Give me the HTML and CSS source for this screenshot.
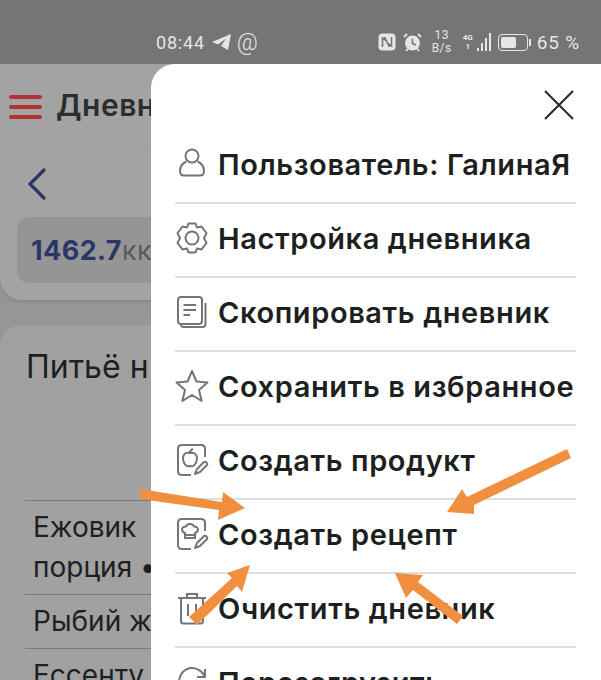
FILE: index.html
```html
<!DOCTYPE html>
<html lang="ru">
<head>
    <meta charset="UTF-8">
    <meta name="viewport" content="width=device-width, initial-scale=1.0">
    <title>Дневник</title>
    <link rel="stylesheet" href="styles.css">
</head>
<body>
    <!-- Статус-бар -->
    <div class="status-bar">
        <div class="status-left">
            <span class="time">08:44</span>
            <svg class="st-icon" width="21" height="18" viewBox="0 0 21 18"><path d="M20 1 L1 9 L7 11.5 L15 5.5 L10 13 L17 17 Z" fill="#e6e6e6"/></svg>
            <span class="at">@</span>
        </div>
        <div class="status-right">
            <svg width="18" height="18" viewBox="0 0 18 18"><rect x="0.5" y="0.5" width="17" height="17" rx="4" fill="#e6e6e6"/><path d="M4.5 14 V5 L9 8 M13.5 4 V13 L9 10 M6.5 4 L11.5 14" fill="none" stroke="#757575" stroke-width="1.6"/></svg>
            <svg width="19" height="19" viewBox="0 0 19 19"><circle cx="9.500" cy="10" r="7.500" fill="#e6e6e6"/><path d="M9.500 5.500 V10.500 L13 12" fill="none" stroke="#757575" stroke-width="1.600"/><path d="M1 4 L4 1 M18 4 L15 1 M3 18 L5 15.500 M16 18 L14 15.500" stroke="#e6e6e6" stroke-width="1.800"/></svg>
            <div class="speed"><span>13</span><span>B/s</span></div>
            <div class="net">
                <div class="net-label"><span>4G</span><span>1</span></div>
                <div class="bars"><i class="b1"></i><i class="b2"></i><i class="b3"></i><i class="b4"></i></div>
            </div>
            <div class="battery"><div class="battery-fill"></div></div>
            <span class="percent">65 %</span>
        </div>
    </div>

    <!-- Страница под меню -->
    <div class="page">
        <header class="top-bar">
            <div class="burger"><i></i><i></i><i></i></div>
            <h1>Дневник</h1>
        </header>
        <section class="summary">
            <svg class="back" width="20" height="32" viewBox="0 0 20 32"><path d="M17 2 L3 16 L17 30" fill="none" stroke="#2a3766" stroke-width="3.200" stroke-linecap="round"/></svg>
            <div class="kcal"><b>1462.7</b><span>кк</span></div>
        </section>
        <section class="drink">
            <h2>Питьё н</h2>
            <ul class="food">
                <li>Ежовик<br>порция •</li>
                <li>Рыбий ж</li>
                <li>Ессенту</li>
            </ul>
        </section>
    </div>

    <!-- Боковое меню -->
    <nav class="drawer">
        <div class="drawer-head">
            <svg width="32" height="32" viewBox="0 0 32 32"><path d="M2 2 L30 30 M30 2 L2 30" stroke="#26292c" stroke-width="2"/></svg>
        </div>
        <a class="item">
            <svg class="icon" viewBox="0 0 34 34"><circle cx="17" cy="9" r="6.500"/><path d="M11.500 14.500 C6 17 5 20 5 24 C5 27 6.500 28.500 9 28.500 H25 C27.500 28.500 29 27 29 24 C29 20 28 17 22.500 14.500"/></svg>
            <span>Пользователь: ГалинаЯ</span>
        </a>
        <a class="item">
            <svg class="icon" viewBox="0 0 34 34"><path d="M13.500 2.500 H20.500 L22 6.500 L26.500 5.500 L31.500 12 L29 17 L31.500 22 L26.500 28.500 L22 27.500 L20.500 31.500 H13.500 L12 27.500 L7.500 28.500 L2.500 22 L5 17 L2.500 12 L7.500 5.500 L12 6.500 Z" stroke-linejoin="round"/><circle cx="17" cy="17" r="6.500"/></svg>
            <span>Настройка дневника</span>
        </a>
        <a class="item">
            <svg class="icon" viewBox="0 0 34 34"><rect x="3" y="2" width="24" height="27" rx="3"/><path d="M8.500 10 H21 M8.500 15 H21 M8.500 20 H15"/><path d="M30.500 8 V29 C30.500 31 29.500 32 27.500 32 H9 C7 32 6 31 6 29.500"/></svg>
            <span>Скопировать дневник</span>
        </a>
        <a class="item">
            <svg class="icon" viewBox="0 0 34 34"><path d="M17 2 L21.500 12.500 L32.500 13.500 L24 21 L26.700 32 L17 26 L7.300 32 L10 21 L1.500 13.500 L12.500 12.500 Z" stroke-linejoin="round"/></svg>
            <span>Сохранить в избранное</span>
        </a>
        <a class="item">
            <svg class="icon" viewBox="0 0 34 34"><path d="M16 32 H7 C4.500 32 3 30.500 3 28 V6 C3 3.500 4.500 2 7 2 H26 C28.500 2 30 3.500 30 6 V14"/><path d="M15 10 C10 8.500 8 12 8 15.500 C8 20 11 24 15 23 C19 24 22 20 22 15.500 C22 12 20 8.500 15 10 Z M15 10 C15 8 16 6.500 18 6"/><path d="M20 31 L22 26 L29 19 C30.500 18 33 20.500 32 22 L25 29 Z" stroke-linejoin="round"/></svg>
            <span>Создать продукт</span>
        </a>
        <a class="item">
            <svg class="icon" viewBox="0 0 34 34"><path d="M16 32 H7 C4.500 32 3 30.500 3 28 V6 C3 3.500 4.500 2 7 2 H26 C28.500 2 30 3.500 30 6 V14"/><path d="M10 16 C6 15 6 9 11 9.500 C12 6 18 6 19 9.500 C24 9 24 15 20 16 V21 H10 Z M10 18 H20"/><path d="M20 31 L22 26 L29 19 C30.500 18 33 20.500 32 22 L25 29 Z" stroke-linejoin="round"/></svg>
            <span>Создать рецепт</span>
        </a>
        <a class="item">
            <svg class="icon" viewBox="0 0 34 34"><path d="M3 7 H31 M12 7 V3 H22 V7 M6 7 V30 C6 31.500 7 32.500 8.500 32.500 H25.500 C27 32.500 28 31.500 28 30 V7 M13 13 V25 M21 13 V25"/></svg>
            <span>Очистить дневник</span>
        </a>
        <a class="item">
            <svg class="icon" viewBox="0 0 34 34"><path d="M4 17 C4 9 10 3 17 3 C23 3 28 7 30 12 M30 4 V12 H22 M30 17 C30 25 24 31 17 31"/></svg>
            <span>Перезагрузить</span>
        </a>
    </nav>

    <!-- Стрелки поверх скриншота -->
    <svg class="arrows" width="601" height="680" viewBox="0 0 601 680">
        <path d="M140 489 L222 502 L223 492 L245 508 L218 520 L219 510 L140 499 Z"/>
        <path d="M567 449 L571 458 L474 505 L474 514 L447 512 L462 489 L467 497 Z"/>
        <path d="M189 617 L232 578 L227 573 L250 565 L242 592 L237 586 L197 625 Z"/>
        <path d="M463 616 L457 624 L413 590 L406 598 L395 573 L423 575 L418 582 Z"/>
    </svg>
</body>
</html>
```

FILE: styles.css
```css
/* Базовые стили */
html, body {
    margin: 0;
    padding: 0;
}

body {
    width: 601px;
    height: 680px;
    overflow: hidden;
    position: relative;
    background-color: #969696;
    font-family: 'Inter', 'Liberation Sans', sans-serif;
    color: #1d1f21;
}

/* Статус-бар */
.status-bar {
    height: 64px;
    background: #757575;
    color: #e6e6e6;
    display: flex;
    justify-content: space-between;
    align-items: flex-end;
    padding: 0 21px 10px 156px;
    box-sizing: border-box;
}

.status-left,
.status-right {
    display: flex;
    align-items: center;
    height: 24px;
}

.time {
    font-family: 'Roboto', sans-serif;
    font-size: 18px;
    letter-spacing: 0.8px;
    margin-right: 6px;
}

.at {
    font-family: 'Roboto', sans-serif;
    font-size: 23px;
    font-weight: 300;
    margin-left: 5px;
}

.status-right {
    gap: 7px;
}

.speed {
    display: flex;
    flex-direction: column;
    align-items: center;
    font-family: 'Roboto', sans-serif;
    font-size: 12px;
    line-height: 13px;
    margin: 0 4px 0 3px;
    letter-spacing: 0.5px;
}

.net {
    display: flex;
    align-items: flex-end;
    gap: 4px;
}

.net-label {
    display: flex;
    flex-direction: column;
    align-items: center;
    font-family: 'Roboto', sans-serif;
    font-size: 8px;
    line-height: 9px;
    font-weight: 700;
}

.bars {
    display: flex;
    align-items: flex-end;
    gap: 2px;
}

.bars i {
    display: block;
    width: 2px;
    background: #e6e6e6;
}

.b1 { height: 3px; }
.b2 { height: 8px; }
.b3 { height: 13px; }
.b4 { height: 18px; }

.battery {
    width: 30px;
    height: 17px;
    border: 1px solid #e6e6e6;
    border-radius: 4px;
    padding: 2px;
    box-sizing: border-box;
    position: relative;
    margin-right: 3px;
}

.battery::after {
    content: "";
    position: absolute;
    right: -4px;
    top: 4px;
    width: 2px;
    height: 7px;
    background: #e6e6e6;
}

.battery-fill {
    width: 65%;
    height: 100%;
    background: #e6e6e6;
    border-radius: 2px;
}

.percent {
    font-family: 'Roboto', sans-serif;
    font-size: 19px;
    letter-spacing: 0.8px;
    margin-left: -1px;
}

/* Страница под меню */
.top-bar {
    height: 86px;
    background: #a3a3a3;
    box-shadow: 0 2px 4px rgba(0, 0, 0, 0.15);
    display: flex;
    align-items: center;
    padding-left: 9px;
    box-sizing: border-box;
}

.top-bar h1 {
    margin: 0 0 5px 14px;
    font-size: 30px;
    font-weight: 600;
    letter-spacing: 0.5px;
    color: #2b2d2f;
}

.burger {
    width: 33px;
    display: flex;
    flex-direction: column;
    gap: 6px;
}

.burger i {
    display: block;
    height: 4px;
    border-radius: 2px;
    background: #b23232;
}

.summary {
    height: 150px;
    background: #a3a3a3;
    border-radius: 0 0 22px 22px;
    box-shadow: 0 2px 4px rgba(0, 0, 0, 0.1);
    padding: 18px 0 0 17px;
    box-sizing: border-box;
}

.back {
    display: block;
    margin-left: 10px;
}

.kcal {
    margin-top: 17px;
    height: 66px;
    background: #959595;
    border-radius: 12px;
    display: flex;
    align-items: center;
    padding-left: 14px;
    font-size: 27px;
    letter-spacing: 0.4px;
}

.kcal b {
    color: #2a3766;
    font-weight: 700;
}

.kcal span {
    color: #5a5a5a;
    font-weight: 400;
}

.drink {
    margin-top: 25px;
    height: 400px;
    background: #a1a1a1;
    border-radius: 22px 22px 0 0;
    padding: 22px 0 0 26px;
    box-sizing: border-box;
}

.drink h2 {
    margin: 0;
    font-size: 32px;
    line-height: 40px;
    font-weight: 400;
}

.food {
    list-style: none;
    margin: 113px 0 0 -1px;
    padding: 0;
}

.food li {
    border-top: 1px solid #7b7b7b;
    padding: 6px 0 7px 8px;
    font-size: 28px;
    line-height: 40px;
}

/* Боковое меню */
.drawer {
    position: absolute;
    top: 64px;
    left: 151px;
    width: 450px;
    height: 616px;
    overflow: hidden;
    background: #fff;
    border-top-left-radius: 24px;
    padding: 0 25px 0 24px;
    box-sizing: border-box;
}

.drawer-head {
    height: 66px;
    display: flex;
    justify-content: flex-end;
    align-items: flex-end;
    margin-right: 1px;
    padding-bottom: 9px;
    box-sizing: border-box;
}

.item {
    display: flex;
    align-items: center;
    gap: 9px;
    height: 74px;
    padding-bottom: 4px;
    box-sizing: border-box;
    border-bottom: 2px solid #dcdfe2;
    font-size: 29px;
    font-weight: 600;
    letter-spacing: 0.6px;
    color: #1d1f21;
    white-space: nowrap;
}

.icon {
    width: 34px;
    height: 34px;
    flex-shrink: 0;
    fill: none;
    stroke: #70767c;
    stroke-width: 2;
}

/* Стрелки */
.arrows {
    position: absolute;
    top: 0;
    left: 0;
    fill: #f0903f;
}
```
